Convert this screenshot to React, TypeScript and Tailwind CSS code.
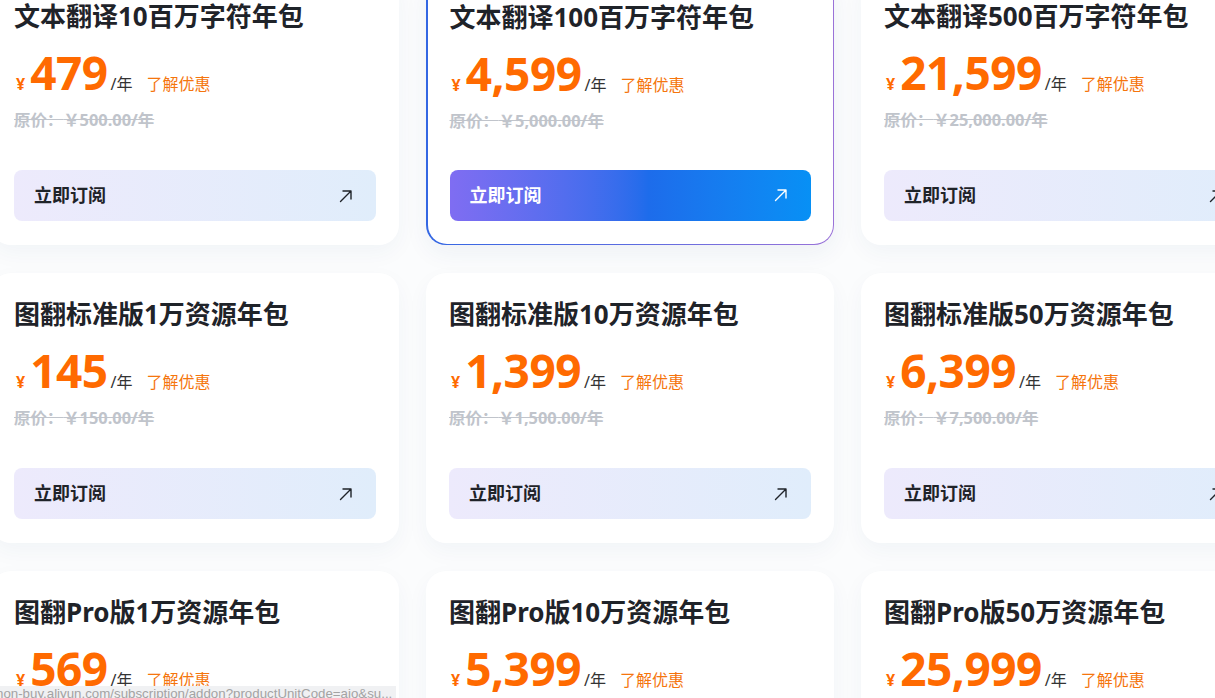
import React from "react";

type Item = { title: string; price: string; orig: string; hot?: boolean };

const items: Item[] = [
  { title: "文本翻译10百万字符年包", price: "479", orig: "￥500.00/年" },
  { title: "文本翻译100百万字符年包", price: "4,599", orig: "￥5,000.00/年", hot: true },
  { title: "文本翻译500百万字符年包", price: "21,599", orig: "￥25,000.00/年" },
  { title: "图翻标准版1万资源年包", price: "145", orig: "￥150.00/年" },
  { title: "图翻标准版10万资源年包", price: "1,399", orig: "￥1,500.00/年" },
  { title: "图翻标准版50万资源年包", price: "6,399", orig: "￥7,500.00/年" },
  { title: "图翻Pro版1万资源年包", price: "569", orig: "￥600.00/年" },
  { title: "图翻Pro版10万资源年包", price: "5,399", orig: "￥5,700.00/年" },
  { title: "图翻Pro版50万资源年包", price: "25,999", orig: "￥28,500.00/年" },
];

function Arrow({ color }: { color: string }) {
  return (
    <svg width="14" height="14" viewBox="0 0 14 14" fill="none">
      <path d="M1.5 12.5 L12 2 M4 2 H12 V10" stroke={color} strokeWidth="1.4" strokeLinecap="round" strokeLinejoin="round" />
    </svg>
  );
}

function CardBody({ it }: { it: Item }) {
  return (
    <div className="flex h-full flex-col rounded-[19px] bg-white px-[22px] pt-[24px] pb-[23px]">
      <div className="text-[26px] font-bold leading-[32px] text-[#1f2329] whitespace-nowrap">{it.title}</div>
      <div className="mt-[16px] flex items-baseline whitespace-nowrap">
        <span className="ml-[2px] text-[16px] font-bold text-[#ff6a00]">¥</span>
        <span className="ml-[5px] text-[46px] font-bold leading-[48px] text-[#ff6a00] tracking-[-0.5px]">{it.price}</span>
        <span className="ml-[3px] text-[16px] text-[#333]">/年</span>
        <span className="ml-[14px] text-[16px] text-[#f5750d]">了解优惠</span>
      </div>
      <div className="mt-[14px] text-[16.4px] font-bold leading-[20px] text-[#c0c4cb] line-through whitespace-nowrap">
        原价：{it.orig}
      </div>
      <div
        className={
          it.hot
            ? "mt-auto flex h-[51px] items-center justify-between rounded-[8px] bg-linear-to-r from-[#7f6df2] via-[#1d6ceb] via-55% to-[#0790f5] pl-5 pr-[23px]"
            : "mt-auto flex h-[51px] items-center justify-between rounded-[8px] bg-linear-to-r from-[#edeafc] to-[#e0edfb] pl-5 pr-[23px]"
        }
      >
        <span className={"text-[18px] font-bold " + (it.hot ? "text-white" : "text-[#1f2329]")}>立即订阅</span>
        <Arrow color={it.hot ? "#ffffff" : "#1f2329"} />
      </div>
    </div>
  );
}

export default function App() {
  return (
    <div className="relative h-[698px] w-[1215px] overflow-hidden bg-[#fbfcfd] font-['Noto_Sans','Noto_Sans_CJK_SC',sans-serif]">
      <div className="ml-[-9px] mt-[-25px] grid w-max grid-cols-[repeat(3,408px)] gap-x-[27px] gap-y-[28px]">
        {items.map((it, i) =>
          it.hot ? (
            <div
              key={i}
              className="h-[270px] rounded-[20px] bg-linear-to-r from-[#3367e3] via-[#5a6be0] to-[#9a72d8] p-[1.5px] shadow-[0_8px_24px_rgba(30,60,120,0.06)]"
            >
              <CardBody it={it} />
            </div>
          ) : (
            <div key={i} className="h-[270px] rounded-[20px] bg-white p-[1px] shadow-[0_8px_22px_rgba(30,60,120,0.045)]">
              <CardBody it={it} />
            </div>
          )
        )}
      </div>
      <div className="absolute left-0 top-[686px] h-[16px] w-[396px] overflow-hidden whitespace-nowrap bg-[#f0f1f3] text-[13.3px] leading-[15px] text-[#a3a3a3] font-['Liberation_Sans',sans-serif]">
        <span className="ml-[-4px]">non-buy.aliyun.com/subscription/addon?productUnitCode=aio&amp;su...</span>
      </div>
    </div>
  );
}
